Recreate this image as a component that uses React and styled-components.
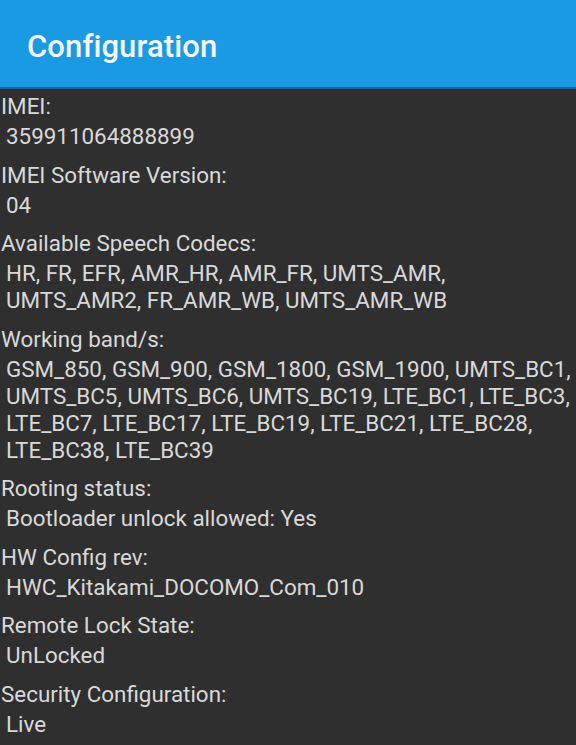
import React from 'react';
import styled, { createGlobalStyle } from 'styled-components';

const GlobalStyle = createGlobalStyle`
  html, body {
    margin: 0;
    padding: 0;
    background: #2f2f2f;
  }
  body {
    font-family: Roboto, "Noto Sans", sans-serif;
  }
`;

const Page = styled.div`
  width: 576px;
  min-height: 745px;
  background: #2f2f2f;
  display: flex;
  flex-direction: column;
`;

const Header = styled.header`
  height: 89px;
  background: #1b9ae4;
  border-bottom: 2px solid #17669a;
  display: flex;
  align-items: center;
  padding-left: 27px;
  box-sizing: border-box;
`;

const Title = styled.h1`
  margin: 0;
  color: #f4f9fd;
  font-size: 31px;
  font-weight: 500;
  letter-spacing: 0.1px;
  padding-top: 5px;
`;

const List = styled.div`
  display: flex;
  flex-direction: column;
  gap: 11.5px;
  padding: 4px 0 0 1px;
`;

const Item = styled.div`
  display: flex;
  flex-direction: column;
  gap: 3px;
`;

const Label = styled.div`
  color: #d9d9d9;
  font-size: 22.4px;
  line-height: 27px;
`;

const Value = styled.div`
  color: #d9d9d9;
  font-size: 22.4px;
  line-height: 27px;
  padding-left: 5px;
  white-space: nowrap;
`;

const items = [
  { label: 'IMEI:', lines: ['359911064888899'] },
  { label: 'IMEI Software Version:', lines: ['04'] },
  {
    label: 'Available Speech Codecs:',
    lines: ['HR, FR, EFR, AMR_HR, AMR_FR, UMTS_AMR,', 'UMTS_AMR2, FR_AMR_WB, UMTS_AMR_WB'],
  },
  {
    label: 'Working band/s:',
    lines: [
      'GSM_850, GSM_900, GSM_1800, GSM_1900, UMTS_BC1,',
      'UMTS_BC5, UMTS_BC6, UMTS_BC19, LTE_BC1, LTE_BC3,',
      'LTE_BC7, LTE_BC17, LTE_BC19, LTE_BC21, LTE_BC28,',
      'LTE_BC38, LTE_BC39',
    ],
  },
  { label: 'Rooting status:', lines: ['Bootloader unlock allowed: Yes'] },
  { label: 'HW Config rev:', lines: ['HWC_Kitakami_DOCOMO_Com_010'] },
  { label: 'Remote Lock State:', lines: ['UnLocked'] },
  { label: 'Security Configuration:', lines: ['Live'] },
];

export default function App() {
  return (
    <Page>
      <GlobalStyle />
      <Header>
        <Title>Configuration</Title>
      </Header>
      <List>
        {items.map((it) => (
          <Item key={it.label}>
            <Label>{it.label}</Label>
            <div>
              {it.lines.map((l) => (
                <Value key={l}>{l}</Value>
              ))}
            </div>
          </Item>
        ))}
      </List>
    </Page>
  );
}
